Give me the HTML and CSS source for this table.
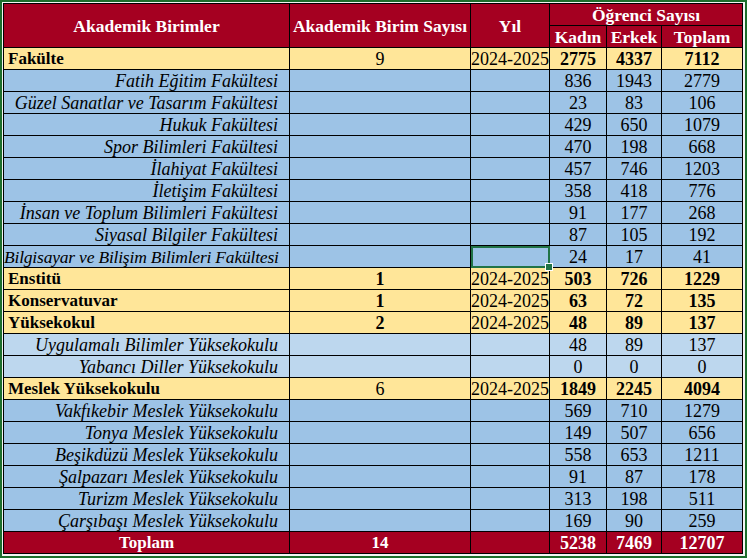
FILE: index.html
```html
<!DOCTYPE html>
<html lang="tr">
<head>
<meta charset="utf-8">
<title>Akademik Birimler</title>
<link rel="stylesheet" href="styles.css">
</head>
<body>
<div class="frame">
<table class="sheet">
<colgroup>
<col class="c1"><col class="c2"><col class="c3"><col class="c4"><col class="c5"><col class="c6">
</colgroup>
<thead>
<tr>
<th rowspan="2">Akademik Birimler</th>
<th rowspan="2">Akademik Birim Sayısı</th>
<th rowspan="2">Yıl</th>
<th colspan="3">Öğrenci Sayısı</th>
</tr>
<tr>
<th>Kadın</th><th>Erkek</th><th>Toplam</th>
</tr>
</thead>
<tbody>
<tr class="grp"><td class="name">Fakülte</td><td class="cnt">9</td><td class="yr">2024-2025</td><td>2775</td><td>4337</td><td>7112</td></tr>
<tr class="sub"><td class="name">Fatih Eğitim Fakültesi</td><td></td><td></td><td>836</td><td>1943</td><td>2779</td></tr>
<tr class="sub"><td class="name">Güzel Sanatlar ve Tasarım Fakültesi</td><td></td><td></td><td>23</td><td>83</td><td>106</td></tr>
<tr class="sub"><td class="name">Hukuk Fakültesi</td><td></td><td></td><td>429</td><td>650</td><td>1079</td></tr>
<tr class="sub"><td class="name">Spor Bilimleri Fakültesi</td><td></td><td></td><td>470</td><td>198</td><td>668</td></tr>
<tr class="sub"><td class="name">İlahiyat Fakültesi</td><td></td><td></td><td>457</td><td>746</td><td>1203</td></tr>
<tr class="sub"><td class="name">İletişim Fakültesi</td><td></td><td></td><td>358</td><td>418</td><td>776</td></tr>
<tr class="sub"><td class="name">İnsan ve Toplum Bilimleri Fakültesi</td><td></td><td></td><td>91</td><td>177</td><td>268</td></tr>
<tr class="sub"><td class="name">Siyasal Bilgiler Fakültesi</td><td></td><td></td><td>87</td><td>105</td><td>192</td></tr>
<tr class="sub"><td class="name tight">Bilgisayar ve Bilişim Bilimleri Fakültesi</td><td></td><td class="sel"><span class="handle"></span></td><td>24</td><td>17</td><td>41</td></tr>
<tr class="grp"><td class="name">Enstitü</td><td class="cnt b">1</td><td class="yr">2024-2025</td><td>503</td><td>726</td><td>1229</td></tr>
<tr class="grp"><td class="name">Konservatuvar</td><td class="cnt b">1</td><td class="yr">2024-2025</td><td>63</td><td>72</td><td>135</td></tr>
<tr class="grp"><td class="name">Yüksekokul</td><td class="cnt b">2</td><td class="yr">2024-2025</td><td>48</td><td>89</td><td>137</td></tr>
<tr class="sub light"><td class="name">Uygulamalı Bilimler Yüksekokulu</td><td></td><td></td><td>48</td><td>89</td><td>137</td></tr>
<tr class="sub light"><td class="name">Yabancı Diller Yüksekokulu</td><td></td><td></td><td>0</td><td>0</td><td>0</td></tr>
<tr class="grp"><td class="name">Meslek Yüksekokulu</td><td class="cnt">6</td><td class="yr">2024-2025</td><td>1849</td><td>2245</td><td>4094</td></tr>
<tr class="sub"><td class="name">Vakfıkebir Meslek Yüksekokulu</td><td></td><td></td><td>569</td><td>710</td><td>1279</td></tr>
<tr class="sub"><td class="name">Tonya Meslek Yüksekokulu</td><td></td><td></td><td>149</td><td>507</td><td>656</td></tr>
<tr class="sub"><td class="name">Beşikdüzü Meslek Yüksekokulu</td><td></td><td></td><td>558</td><td>653</td><td>1211</td></tr>
<tr class="sub"><td class="name">Şalpazarı Meslek Yüksekokulu</td><td></td><td></td><td>91</td><td>87</td><td>178</td></tr>
<tr class="sub"><td class="name">Turizm Meslek Yüksekokulu</td><td></td><td></td><td>313</td><td>198</td><td>511</td></tr>
<tr class="sub"><td class="name">Çarşıbaşı Meslek Yüksekokulu</td><td></td><td></td><td>169</td><td>90</td><td>259</td></tr>
</tbody>
<tfoot>
<tr class="total"><td class="tname">Toplam</td><td class="tname">14</td><td></td><td>5238</td><td>7469</td><td>12707</td></tr>
</tfoot>
</table>
</div>
</body>
</html>
```

FILE: styles.css
```css
html, body {
  margin: 0;
  padding: 0;
  background: #ffffff;
}

.frame {
  box-sizing: border-box;
  width: 747px;
  height: 558px;
  border: 2px solid #1d6e2c;
  padding: 1px 0 0 1px;
  background: #f4f4f4;
  overflow: hidden;
}

.sheet {
  border-collapse: collapse;
  table-layout: fixed;
  width: 739px;
  font-family: "Liberation Serif", "Times New Roman", serif;
  font-size: 18px;
  color: #000;
}

.c1 { width: 286px; }
.c2 { width: 181px; }
.c3 { width: 79px; }
.c4 { width: 57px; }
.c5 { width: 55px; }
.c6 { width: 81px; }

.sheet th,
.sheet td {
  border: 1px solid #000;
  height: 21px;
  padding: 0;
  text-align: center;
  vertical-align: middle;
  white-space: nowrap;
  line-height: 20px;
}

.sheet th {
  background: #a50021;
  color: #fff;
  font-weight: bold;
  font-size: 17.5px;
}

.grp td {
  background: #ffe699;
  font-weight: bold;
}

.grp td.name {
  text-align: left;
  padding-left: 4px;
  font-size: 17px;
}

.grp td.cnt,
.grp td.yr {
  font-weight: normal;
}

.grp td.cnt.b {
  font-weight: bold;
}

.grp td.yr {
  text-align: left;
}

.sub td {
  background: #9dc3e6;
}

.sub.light td {
  background: #bdd7ee;
}

.sub td.name {
  font-style: italic;
  text-align: right;
  padding-right: 11px;
}

.sub td.tight {
  font-size: 17.5px;
  letter-spacing: -0.2px;
}

.sel {
  position: relative;
  outline: 2px solid #217346;
  outline-offset: -2px;
}

.handle {
  position: absolute;
  right: -4px;
  bottom: -4px;
  width: 6px;
  height: 6px;
  background: #217346;
  border: 1px solid #fff;
  z-index: 2;
}

.total td {
  background: #a50021;
  color: #fff;
  font-weight: bold;
}

.total td.tname {
  font-size: 17px;
}
```
